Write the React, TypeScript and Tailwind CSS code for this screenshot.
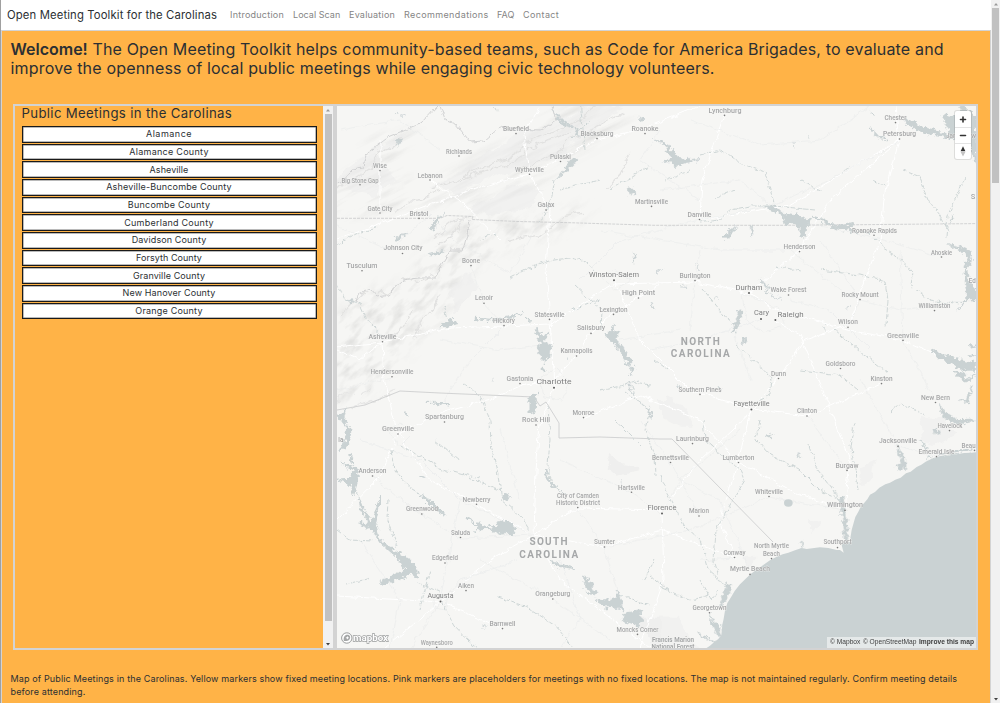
import React from "react";

const meetings: [string, string][] = [
  ["Alamance", "tracking-[0.5px]"],
  ["Alamance County", "tracking-[0.27px]"],
  ["Asheville", "tracking-[0.08px]"],
  ["Asheville-Buncombe County", "tracking-[0.17px]"],
  ["Buncombe County", "tracking-[0.22px]"],
  ["Cumberland County", "tracking-[0.25px]"],
  ["Davidson County", "tracking-[0.12px]"],
  ["Forsyth County", "tracking-[0.04px]"],
  ["Granville County", "tracking-[0.1px]"],
  ["New Hanover County", "tracking-[0.11px]"],
  ["Orange County", "tracking-[0.2px]"],
];

const navLinks: [string, string][] = [
  ["Introduction", "w-[54px] tracking-[0.24px]"],
  ["Local Scan", "w-[47px] tracking-[0.04px]"],
  ["Evaluation", "w-[46px] tracking-[0.22px]"],
  ["Recommendations", "w-[84px] tracking-[0.38px]"],
  ["FAQ", "w-[17px]"],
  ["Contact", "w-[37px] tracking-[0.4px]"],
];

// name, centre x, baseline y, width, dot x, dot y
type Place = [string, number, number, number, number, number];

const towns: Place[] = [
  ["Bluefield", 516, 131, 26, 516, 133.6],
  ["Blacksburg", 597, 136, 33, 597, 138.6],
  ["Roanoke", 645, 130.5, 27, 645, 133.6],
  ["Richlands", 459, 153.5, 26, 459, 156],
  ["Pulaski", 560.5, 159, 21, 560.5, 161.5],
  ["Wise", 380, 168, 14, 380, 170.6],
  ["Wytheville", 529.5, 171.5, 29, 529.5, 174.3],
  ["Lebanon", 430, 177.5, 25, 430, 180],
  ["Big Stone Gap", 360, 182.5, 37, 360, 184.7],
  ["Galax", 546, 207, 17, 546, 210],
  ["Martinsville", 651.5, 203.5, 33, 651.5, 206.4],
  ["Gate City", 380, 210.5, 25, 380, 213],
  ["Bristol", 419, 215.5, 19, 419, 218.4],
  ["Johnson City", 403, 250.3, 39, 402.5, 253.5],
  ["Boone", 471, 263, 18, 471, 265.6],
  ["Tusculum", 362, 267.5, 31, 362, 270.8],
  ["High Point", 638.5, 294.7, 33, 638.5, 298],
  ["Lenoir", 484, 300.3, 18, 484, 303.2],
  ["Lexington", 613.5, 311.5, 28, 613.5, 314.4],
  ["Statesville", 549.5, 316.5, 30, 549.5, 319.4],
  ["Hickory", 504, 322.7, 22, 504, 325.6],
  ["Salisbury", 591, 330.3, 28, 591, 333.4],
  ["Asheville", 382.5, 338.7, 28, 382.5, 341.7],
  ["Kannapolis", 576.5, 353, 32, 576.5, 356],
  ["Hendersonville", 392, 373.8, 43, 392, 376.7],
  ["Gastonia", 520, 380.5, 27, 520, 383.6],
  ["Lynchburg", 725, 112.6, 33, 724.5, 115.4],
  ["Chester", 895.5, 120, 22, 895.5, 122.6],
  ["Petersburg", 899.5, 136.3, 33, 899.5, 139],
  ["Danville", 699.5, 217, 24, 699.5, 219.5],
  ["Roanoke Rapids", 874.5, 232.5, 45, 874, 235.3],
  ["Henderson", 799.5, 249, 32, 799.5, 251.6],
  ["Ahoskie", 941.5, 254.8, 21, 941.5, 257],
  ["Burlington", 695, 278, 31, 695, 280.6],
  ["Wake Forest", 788.5, 292.3, 36, 788.5, 295],
  ["Rocky Mount", 860, 297, 37, 860, 299.6],
  ["Williamston", 934.5, 308.3, 32, 934.5, 310.6],
  ["Wilson", 848, 324.3, 20, 848, 327.2],
  ["Greenville", 903, 337.5, 32, 903, 340.4],
  ["Goldsboro", 840.5, 366, 30, 840.5, 368.5],
  ["Dunn", 778.5, 375.7, 15, 778.5, 378.5],
  ["Kinston", 881.5, 381, 22, 881.5, 383.6],
  ["Spartanburg", 444.5, 419, 39, 444.5, 422],
  ["Greenville", 398, 431, 32, 398, 434],
  ["Monroe", 583.5, 415, 22, 583.5, 417.6],
  ["Rock Hill", 536, 422, 28, 536, 425],
  ["Anderson", 372.5, 473, 28, 372.5, 476],
  ["Newberry", 476.5, 501.5, 28, 476.5, 504.3],
  ["Greenwood", 422, 511.3, 32, 421.8, 514],
  ["Hartsville", 631.5, 489.6, 27, 631.5, 492.3],
  ["City of Camden", 578, 497.7, 42, -9, -9],
  ["Historic District", 578, 505, 44, 577.8, 507.6],
  ["Saluda", 460.5, 534.6, 19, 460.5, 537.5],
  ["Sumter", 604.5, 544.2, 21, 604.5, 547],
  ["Edgefield", 445, 560.3, 26, 445, 563],
  ["Aiken", 466, 588, 16, 466, 590.6],
  ["Orangeburg", 552.8, 596, 35, 552.8, 599],
  ["Barnwell", 502.5, 626, 26, 502.5, 628.6],
  ["Moncks Corner", 637.5, 631.6, 42, 637.5, 634.4],
  ["Waynesboro", 436.7, 644.7, 32, 436.7, 647.4],
  ["Southern Pines", 700, 391.5, 43, 700, 394.4],
  ["Clinton", 807, 413.4, 20, 807, 416],
  ["New Bern", 935.5, 399.8, 29, 935.5, 402.5],
  ["Laurinburg", 692.5, 440.7, 33, 692.5, 443.6],
  ["Havelock", 950, 428.3, 25, 949.5, 430.6],
  ["Jacksonville", 898, 443.3, 38, 898, 446.4],
  ["Emerald Isle", 936.5, 453.5, 36, 936.5, 456.6],
  ["Beau", 968.6, 447.5, 14, 974.5, 450.4],
  ["Bennettsville", 670.5, 459.8, 37, 670.5, 462.5],
  ["Lumberton", 738.5, 459.5, 32, 738.5, 462.5],
  ["Burgaw", 847, 467.8, 23, 847, 470.4],
  ["Whiteville", 769, 494, 28, 769, 496.5],
  ["Wilmington", 845, 507, 36, 845, 510.4],
  ["Marion", 699, 513.3, 20, 699, 516],
  ["Southport", 837.5, 544.3, 28, 837.5, 547.6],
  ["Conway", 734.5, 554.8, 22, 734.5, 557.5],
  ["North Myrtle", 771.5, 548.3, 35, -9, -9],
  ["Beach", 771.5, 555.7, 17, 771.5, 558.6],
  ["Myrtle Beach", 750, 571, 40, 750, 574.4],
  ["Georgetown", 709.5, 610, 34, 709.5, 612.8],
  ["Ed", 972.3, 283, 7, -9, -9],
  ["S", 973, 199, 4.5, -9, -9],
  ["Jamestow", 961, 137.5, 30, -9, -9],
  ["la", 340.8, 441.5, 5, -9, -9],
];

const cities: Place[] = [
  ["Winston-Salem", 614, 276.6, 50, 614, 280.3],
  ["Durham", 749, 289.8, 27, 749, 293],
  ["Cary", 761.5, 315.4, 15, 761, 319],
  ["Raleigh", 790.5, 317.3, 26, 775.4, 320],
  ["Charlotte", 554, 384, 35, 554, 387.8],
  ["Fayetteville", 751.5, 406, 36, 751.4, 409.4],
  ["Florence", 662, 510, 29, 662, 513.5],
  ["Augusta", 440.5, 598, 26, 440.5, 601.5],
];

const Label = ({ place, city }: { place: Place; city?: boolean }) => {
  const [name, cx, y, w, dx, dy] = place;
  return (
    <g>
      <text
        x={cx}
        y={y}
        textAnchor="middle"
        textLength={w}
        lengthAdjust="spacingAndGlyphs"
        fontSize={city ? 8 : 7.2}
        fontWeight={city ? 400 : 500}
        fill={city ? "#808182" : "#a6a7a8"}
        stroke="#f6f6f4"
        strokeWidth={0.6}
        paintOrder="stroke"
      >
        {name}
      </text>
      <circle cx={dx} cy={dy} r={city ? 1 : 0.8} fill={city ? "#5c5c5c" : "#7b7b7b"} />
    </g>
  );
};

const nw = "translate(330 100) scale(0.33333)";
const ne = "translate(660 100) scale(0.33333)";
const sw = "translate(330 370) scale(0.33333)";
const se = "translate(660 370) scale(0.33333)";

const CarolinaMap = () => (
  <svg
    viewBox="337 106 639 542"
    preserveAspectRatio="none"
    className="block h-[542px] w-[639px] font-['Roboto',sans-serif]"
  >
    <defs>
      <filter id="shore" x="-10%" y="-10%" width="120%" height="120%">
        <feTurbulence type="fractalNoise" baseFrequency="0.22" numOctaves="3" seed="7" />
        <feDisplacementMap in="SourceGraphic" scale="8" xChannelSelector="R" yChannelSelector="G" />
      </filter>
      <filter id="wiggle" x="-10%" y="-10%" width="120%" height="120%">
        <feTurbulence type="fractalNoise" baseFrequency="0.12" numOctaves="3" seed="3" />
        <feDisplacementMap in="SourceGraphic" scale="6" xChannelSelector="R" yChannelSelector="G" />
      </filter>
      <filter id="relief" x="-10%" y="-10%" width="120%" height="120%">
        <feTurbulence type="fractalNoise" baseFrequency="0.06" numOctaves="4" seed="11" />
        <feDisplacementMap in="SourceGraphic" scale="14" xChannelSelector="R" yChannelSelector="G" />
        <feGaussianBlur stdDeviation="0.5" />
      </filter>
      <filter id="ridges" x="0%" y="0%" width="100%" height="100%" colorInterpolationFilters="sRGB">
        <feTurbulence type="fractalNoise" baseFrequency="0.018 0.13" numOctaves="4" seed="5" />
        <feColorMatrix values="0 0 0 0 0.45  0 0 0 0 0.45  0 0 0 0 0.45  2 0 0 0 -0.9" />
      </filter>
      <filter id="peaks" x="0%" y="0%" width="100%" height="100%" colorInterpolationFilters="sRGB">
        <feTurbulence type="fractalNoise" baseFrequency="0.05 0.13" numOctaves="4" seed="9" />
        <feColorMatrix values="0 0 0 0 0.45  0 0 0 0 0.45  0 0 0 0 0.45  2 0 0 0 -0.9" />
      </filter>
      <filter id="soft">
        <feGaussianBlur stdDeviation="7" />
      </filter>
      <mask id="valleys" maskUnits="userSpaceOnUse" x="337" y="106" width="640" height="542">
        <path
          filter="url(#soft)"
          fill="#ffffff"
          d="M330 190 L370 140 L420 125 L400 165 L420 195 L470 160 L520 130 L570 106 L640 106 L620 130 L560 165 L500 215 L440 205 L370 215 L330 215Z"
        />
      </mask>
      <mask id="blueridge" maskUnits="userSpaceOnUse" x="337" y="106" width="640" height="542">
        <path
          filter="url(#soft)"
          fill="#ffffff"
          d="M330 320 L370 290 L410 282 L430 240 L460 220 L550 215 L600 200 L570 230 L500 250 L465 275 L450 310 L420 340 L390 372 L370 395 L330 405Z"
        />
      </mask>
    </defs>
    <rect x="337" y="106" width="640" height="542" fill="#f6f6f4" />

    {/* hill shading */}
    <g mask="url(#valleys)" opacity="0.19">
      <g transform="rotate(-27 470 160)">
        <rect x="300" y="40" width="380" height="240" filter="url(#ridges)" />
      </g>
    </g>
    <g mask="url(#blueridge)" opacity="0.2">
      <g transform="rotate(-42 440 310)">
        <rect x="260" y="180" width="380" height="260" filter="url(#peaks)" />
      </g>
    </g>
    <g filter="url(#relief)" fill="none" strokeLinecap="round">
      <g transform={nw}>
        <path fill="#ececeb" fillOpacity="0.5" d="M20 250 L60 200 L130 145 L230 95 L215 125 L140 165 L200 240 L130 285 L70 275Z M440 190 L560 100 L690 60 L780 20 L880 18 L820 70 L700 160 L540 220 L380 270 L290 270Z M430 330 L520 260 L640 265 L600 320 L480 345Z M370 560 L430 520 L430 570 L370 640Z" />
        <g stroke="#e2e2e1" strokeWidth="4">
          <path d="M300 270 L420 225 L520 175 L640 110 L760 55 L800 20 M400 240 L500 205 L600 150 L720 100 M580 210 L680 150 L780 90 L880 40 M190 330 L260 300 L320 280 M20 270 L70 240 L130 200 L150 160 L220 110" />
          <path d="M310 410 L370 360 L420 350 M320 430 L380 395 L400 360 M540 430 L620 410 L700 350 L760 340 M830 260 L870 220 L900 160" />
          <path d="M30 650 L60 620 L100 580 M160 720 L210 690 L250 630 M250 710 L300 640 L330 590 M210 530 L260 545 L310 525 M140 570 L170 590 L200 560" />
        </g>
      </g>
      <g transform={sw}>
        <path fill="#efefee" d="M835 300 L850 255 L875 275 L900 280 L920 300 L860 320Z M925 740 L1020 740 L1020 830 L960 830Z" />
        <path stroke="#e6e6e5" strokeWidth="4" d="M60 110 L140 90 L200 60 M20 90 L60 70 M90 70 L130 50" />
      </g>
      <g transform={se}>
        <path fill="#f1f1f0" d="M0 80 L80 120 L110 170 L60 170 L0 140Z M780 140 L840 150 L890 190 L850 230 L790 210Z M590 290 L650 270 L640 330 L600 350Z M450 460 L475 455 L470 480 L450 485Z M0 740 L50 740 L120 830 L0 830Z M250 560 L300 560 L260 600Z" />
      </g>
    </g>

    {/* roads */}
    <g fill="none" stroke="#ffffff" strokeWidth="1" filter="url(#wiggle)">
      <path d="M337 347 L382 342 L450 328 L504 326 L550 324 L614 284 L695 282 L749 293 L775 310 L848 330 L903 340 L976 372" />
      <path d="M398 434 L444 412 L490 400 L520 386 L554 380 L576 356 L591 333 L614 312 L640 296 L660 284" />
      <path d="M554 388 L540 425 L536 470 L534 535 L560 580 L600 610 L650 648" />
      <path d="M554 388 L550 320 L546 270 L550 210 L529 174 L524 135 L540 106" />
      <path d="M337 240 L402 215 L470 190 L529 174 L560 158 L597 140 L645 128 L700 106" />
      <path d="M385 648 L440 602 L490 560 L534 535 L577 508 L662 510 L700 460 L751 412 L778 378 L805 340 L848 325 L880 240 L884 200 L899 140 L895 106" />
      <path d="M337 520 L380 476 L398 434 M398 434 L430 480 L534 535 M337 596 L440 602 L502 628 M534 535 L604 547 L662 530 L735 558" />
      <path d="M382 342 L384 380 L398 434 M382 342 L360 360 L337 350 M775 320 L800 335 L835 420 L850 460 L845 510" />
      <path d="M662 513 L664 580 L640 648 M751 409 L738 462 L720 520 L735 558 M583 418 L640 395 L700 420 L738 462 L800 495 L845 510" />
      <path d="M614 280 L640 340 L690 390 L751 409 L807 416 L881 384 M749 293 L799 251 L830 200 L899 140" />
      <path d="M700 220 L702 180 L724 115 M700 220 L790 205 L899 140 M380 213 L380 170 L380 140 M430 180 L459 200 L500 240" />
    </g>
    <g fill="none" stroke="#e9ebeb" strokeWidth="0.6" filter="url(#wiggle)">
      <path d="M337 225 L390 250 L430 215 L455 240 L510 274 L546 210 M471 265 L484 303 L504 326 L470 360 L444 400 M580 280 L620 240 L690 222 L770 206 L830 180 L899 142" />
      <path d="M690 120 L760 145 L820 140 L870 106 M660 190 L740 180 L790 220 L870 236 L941 257 M650 350 L700 340 L760 320 M790 250 L840 290 L860 300 L900 310 L976 300" />
      <path d="M360 440 L420 460 L460 500 L440 600 M460 500 L534 535 M372 476 L420 514 L460 538 L534 535 M500 430 L520 500 M577 508 L604 547 L620 600 M604 547 L690 530 L769 497 L845 510" />
      <path d="M700 560 L735 558 M680 480 L720 500 L750 570 M807 416 L847 470 M860 380 L898 446 L936 456 M640 420 L670 462 L700 516 M560 460 L631 492 L660 513 M480 560 L553 599 L610 640 M410 648 L440 602" />
      <path d="M340 130 L400 120 L440 150 M660 130 L640 160 L700 200 M337 390 L392 377 M560 560 L580 620 L560 648 M740 310 L735 340 L751 380 M790 300 L830 310 L870 350" />
      <path d="M742 292 L760 301 L778 308 L785 326 L763 332 L745 320Z M540 378 L556 368 L570 382 L562 400 L544 397Z M600 276 L614 270 L632 280 L616 290Z M388 430 L400 423 L412 434 L400 446Z M434 596 L447 597 L446 610 L434 608Z" />
      <path d="M440 340 L500 350 L540 345 M620 340 L680 330 M600 230 L660 240 L720 250 L790 250 M700 250 L695 282 L690 330 M820 240 L860 300 L848 325 M900 250 L903 340 L935 400 M740 430 L680 480 L662 513 M520 560 L460 580 L440 602 M360 540 L400 600 L390 648" />
    </g>

    {/* state lines */}
    <g fill="none" stroke="#c9cacb" strokeWidth="0.8">
      <path strokeDasharray="3 1" d="M337 218.3 H440 L447 215.5 L473 216.5 L472 219.5 L518 221.5 L570 222.7 L654 225.3 L780 225.3 L850 224.8 L976 223.6" />
      <g filter="url(#wiggle)">
        <path d="M470 220 L467 235 L463 250 L450 250 L441 265 L435 278 L418 278 L404 280 L388 295 L378 297 L370 288 L358 294 L356 303" />
        <path d="M437 106 L420 124 L390 136 L366 154 L363 168 L352 170 L337 186 M440 106 L445 120 L456 124 L470 142 L484 141 L500 127 L514 129 L540 130 L556 122 L552 106" />
      </g>
      <path d="M337 410 L365 405 L400 391 L440 393 L534 397 L540 406 L546 402 L559 423 L559 438 L600 437 L660 439 L672 439 L773 542" />
    </g>

    {/* rivers */}
    <g fill="none" stroke="#cad2d3" strokeWidth="0.9" filter="url(#wiggle)">
      <g strokeDasharray="5 1.5">
        <path d="M337 245 L350 238 L362 232 L378 227 M443 305 L447 318 M510 278 L530 268 L553 260 L570 258 L586 262 L595 272 M337 282 L345 300 L360 305 L366 318 L382 336" />
        <path d="M555 180 L552 196 L546 215 L538 222 M700 155 L720 150 L745 165 L765 172 L772 196 L775 206 M815 210 L775 206 L750 206 L730 210 L717 220 L700 223" />
        <path d="M902 170 L918 176 L928 200 L940 215 L949 232 M965 178 L957 195 L948 215 L946 238 M875 238 L884 248 L896 255 L912 272 L910 285 L930 300 M930 300 L960 305 L970 295" />
        <path d="M776 266 L800 272 M820 270 L860 275 L885 282 L888 300 L886 325 M835 330 L865 355 L888 372 M702 288 L720 310 L734 328 M736 346 L760 365 L772 380 L770 396 L757 402" />
        <path d="M464 384 L480 395 L490 420 L491 445 L498 475 L502 500 L520 515 L530 530 M392 450 L395 470 L412 490 L430 500 M400 445 L440 468 L480 478 M435 440 L460 460" />
        <path d="M470 478 L500 490 M548 405 L550 440 L548 465 L550 480 M632 385 L636 400 L650 410 L645 430 L655 455 L656 475 M355 490 L365 510 L380 530" />
        <path d="M417 583 L440 592 L446 610 L455 626 L468 640 L478 648 M498 597 L525 606 L555 625 L573 648 M388 500 L387 520 L398 545 M345 585 L370 578" />
        <path d="M337 530 L350 540 L373 541 M600 390 L640 380 M625 392 L650 410 M650 385 L635 382 M660 475 L665 490 L684 525 L700 540 L708 570 L720 580" />
        <path d="M703 420 L705 440 L740 470 L745 480 L730 505 L716 530 L714 560 L720 580 L728 590 M760 420 L756 440 L770 455 L800 470 L820 490 L842 500" />
        <path d="M809 445 L815 465 L832 488 L842 508 M855 422 L850 445 L856 470 L858 490 M890 412 L900 403 L925 415 M842 508 L835 490 M700 580 L712 600 L718 590 M662 588 L690 600 L710 595" />
        <path d="M615 420 L640 445 M495 106 L498 112 M610 190 L650 165 M560 190 L600 180 M480 240 L495 235 M580 100 L585 150 M575 285 L602 310 L601 330 M430 570 L420 610 M620 595 L650 605 M650 575 L668 590" />
        <path d="M735 190 L715 198 M800 180 L822 192 M872 180 L886 186 M690 170 L665 180 M840 175 L850 166 M600 300 L570 310 M655 360 L668 370 M858 390 L840 375 L800 370 M570 140 L590 120 M643 580 L655 560" />
      </g>
    </g>

    {/* lakes and sounds */}
    <g fill="#cad2d3" stroke="#cad2d3" strokeWidth="1.6" strokeLinejoin="round" filter="url(#shore)">
      <g transform={nw}>
        <path d="M300 385 L315 360 L345 335 L320 368 L310 395Z M195 40 L230 48 L200 42Z M195 120 L220 115 L205 135Z M195 410 L230 400 L200 425Z M290 460 L340 450 L320 468Z M55 600 L70 605 L60 615Z" />
        <path d="M330 680 L365 655 L378 670 L350 680Z M430 655 L490 658 L540 650 L580 640 L540 656 L490 663Z M580 645 L600 668 L590 655Z" strokeWidth="3" />
        <path d="M615 685 L640 705 L655 700 L640 725 L665 735 L660 770 L640 790 L625 760 L630 730Z M636 800 L648 815 L636 820Z" />
        <path d="M820 700 L840 695 L850 670 L852 700 L870 690 L860 720 L880 740 L905 780 L900 800 L880 775 L845 720Z M900 800 L905 825 L915 805Z" />
        <path d="M895 260 L912 270 L915 288 L895 280Z M910 460 L920 465 L908 485Z M970 118 L1000 125 L1020 140 L1000 132Z M1005 185 L1020 190 M720 180 L745 178 L710 210 L680 238 L705 205Z M665 30 L700 65 L740 85 L745 110 L735 88 L695 72Z M930 50 L945 58 L935 64Z M960 605 L975 630 L965 620Z M710 773 L716 780Z M540 535 L550 530Z M975 518 L1005 508Z" />
      </g>
      <g transform={ne}>
        <path d="M0 115 L30 145 L50 170 L75 180 L120 175 L75 190 L50 200 L30 182 L5 185 L35 175Z" />
        <path strokeWidth="3" d="M305 318 L345 322 L375 345 L390 342 L410 345 L450 360 L440 380 L430 415 L420 410 L420 380 L400 370 L375 375 L370 350 L340 330Z M455 352 L490 358 L530 380 L580 370 L570 388 L635 400 L580 394 L520 382 L490 366Z" />
        <path d="M185 415 L210 390 L230 380 L205 415Z M270 380 L278 378 L275 410Z M300 540 L322 555 L320 575 L345 590 L365 600 L335 585Z M235 630 L248 635 L230 690 L212 705 L225 675Z M245 715 L262 712 L252 735Z M485 675 L500 690Z M555 625 L572 620Z M108 490 L115 510Z M162 595 L175 590Z M60 560 L85 563Z M440 105 L448 115Z M398 130 L402 142Z" />
        <path strokeWidth="5" d="M635 88 L660 115 L685 118 L655 112Z M630 38 L645 45Z M735 62 L760 60 L775 80 L820 90 L850 100 L880 118 L840 105 L800 100 L770 88Z M850 45 L880 52 L890 90 L885 50 L910 18 L930 40 L948 50 L948 190 L938 160 L930 120 L890 120 L870 100Z" />
        <path d="M860 430 L900 440 L930 455 L935 480 L920 500 L925 540 L948 565 L948 600 L925 600 L890 630 L920 595 L915 540 L915 500 L925 470 L890 445Z" />
        <path strokeWidth="5" d="M815 750 L850 765 L890 778 L948 790 L948 810 L920 810 L870 792 L840 775Z M930 740 L948 735Z M925 765 L948 768Z M872 360 L878 350Z" />
      </g>
      <g transform={sw}>
        <path strokeWidth="4" d="M25 140 L48 118 L40 150 L62 180 L58 215 L40 240 L30 240 L48 210 L50 170Z M35 280 L80 295 L85 320 L70 375 L62 345 L20 328 L65 325 L70 300Z M60 250 L70 280 L64 275Z" />
        <path strokeWidth="4" d="M85 385 L100 420 L125 460 L145 400 L152 380 L135 465 L150 510 L190 540 L240 570 L260 600 L262 622 L240 612 L185 635 L150 640 L190 615 L230 600 L200 560 L155 520 L125 475 L80 460 L118 460 L95 420Z" />
        <path strokeWidth="3" d="M270 375 L300 390 L340 430 L352 438 L320 425Z M405 440 L450 465 L490 475 L510 450 L550 460 L555 490 L510 492 L480 478 L430 480 L450 470Z M530 365 L538 380 L530 395 L515 385Z M292 97 L355 98 L360 105Z M600 80 L620 70 L615 125 L600 128Z M650 300 L658 330 L680 355 L710 375 L670 350 L648 325Z M270 318 L284 322Z M226 125 L234 138Z M660 575 L700 585 L735 595 L690 590Z" />
        <path d="M760 620 L775 625 L798 670 L790 678 L765 655Z M795 685 L835 690 L860 680 L862 660 L875 700 L882 720 L850 710 L820 712Z M880 730 L932 722 L935 755 L920 770 L880 755Z M896 30 L902 60 L908 70 L898 62Z M955 110 L965 130 L960 150 M870 330 L882 345 M460 768 L470 772Z M195 515 L200 535 M485 22 L490 35" />
      </g>
      <g transform={se}>
        <path
          strokeWidth="5"
          d="M540 380 L548 385 L558 440 L562 505 L554 505 L548 440Z M712 232 L735 275 L732 298 L708 290 L728 280Z M838 105 L852 125 L890 150 L945 148 L890 163 L850 140Z M880 0 L905 8 L920 30 L948 15 L915 38Z M900 90 L925 98 L935 50 L918 90Z M822 178 L840 180 L832 195Z M780 215 L800 235Z M802 265 L860 250 L940 235 L860 258Z M415 250 L420 262Z M390 285 L400 290Z M55 45 L62 50Z M175 50 L182 55Z M320 195 L335 202Z M425 515 L428 535Z M150 735 L158 760 L182 770 L175 795 L160 770Z M115 790 L160 815Z M200 640 L212 650 L198 690 L178 710 L190 680Z"
        />
      </g>
    </g>

    {/* ocean */}
    <g transform={se}>
      <ellipse cx="385" cy="399" rx="13" ry="11" fill="#cad2d3" />
      <path fill="#cad2d3" d="M960 246 L935 248 L912 249 L890 253 L862 257 L835 262 L812 268 L797 275 L784 284 L770 291 L752 305 L738 310 L722 323 L706 329 L690 338 L676 343 L658 353 L645 366 L630 374 L622 388 L613 398 L602 411 L595 425 L586 441 L580 462 L575 480 L571 505 L575 517 L553 514 L545 526 L551 548 L540 540 L530 540 L505 534 L480 532 L440 537 L425 534 L405 541 L385 548 L368 553 L350 560 L330 571 L314 582 L290 599 L272 612 L257 626 L240 643 L224 663 L213 682 L202 699 L195 722 L191 746 L187 764 L184 795 L175 807 L162 817 L150 827 L128 842 L960 842Z" />
      <path fill="none" stroke="#f6f6f4" strokeWidth="3" d="M948 243 L900 246 L840 257 L800 268" />
    </g>

    {towns.map((p, i) => (
      <Label key={i} place={p} />
    ))}
    {cities.map((p, i) => (
      <Label key={i} place={p} city />
    ))}

    <g fill="#a6a8a9" stroke="#f6f6f4" strokeWidth="0.6" paintOrder="stroke" textAnchor="middle">
      <g fontSize="10" fontWeight="700">
        <text x="700.3" y="344.7" textLength="39">NORTH</text>
        <text x="700.3" y="357.2" textLength="59">CAROLINA</text>
        <text x="548.5" y="545" textLength="38">SOUTH</text>
        <text x="548.7" y="557.5" textLength="59">CAROLINA</text>
      </g>
      <g fontSize="6.8" fontWeight="700">
        <text x="673" y="641.5" textLength="42" lengthAdjust="spacingAndGlyphs">Francis Marion</text>
        <text x="673" y="649" textLength="43" lengthAdjust="spacingAndGlyphs">National Forest</text>
      </g>
    </g>

    {/* provider mark */}
    <g>
      <circle cx="346.8" cy="638" r="5.2" fill="#ffffff" stroke="#9b9d9d" strokeWidth="1" />
      <path d="M343.8 641 C343.2 637.2 344.6 634.8 347.4 634.8 C350 634.8 350.8 637.4 349.6 639.2 C348.4 640.9 346.2 641.2 343.8 641Z" fill="#a5a7a7" />
      <path d="M347.4 636.1 L348 637.3 L349.2 637.8 L348 638.4 L347.4 639.6 L346.8 638.4 L345.6 637.8 L346.8 637.3Z" fill="#ffffff" />
      <text
        x="353"
        y="641.2"
        textLength="35"
        lengthAdjust="spacingAndGlyphs"
        fontSize="9.5"
        fontWeight="700"
        fill="#ffffff"
        stroke="#9b9d9d"
        strokeWidth="1.3"
        paintOrder="stroke"
      >
        mapbox
      </text>
    </g>
  </svg>
);

const ScrollArrow = ({ down, dark }: { down?: boolean; dark?: boolean }) => (
  <svg viewBox="0 0 8 8" className="block h-2 w-2">
    <path d={down ? "M2 3 H6 L4 5.4Z" : "M2 5.4 H6 L4 3Z"} fill={dark ? "#404040" : "#9a9a9a"} />
  </svg>
);

export default function App() {
  return (
    <div className="flex h-[703px] w-[1000px] overflow-hidden bg-white font-['Inter',sans-serif] text-[#2b2f33]">
      <div className="flex h-full w-[991px] flex-col border-l border-[#a0a0a0]">
        <nav className="flex h-[30px] shrink-0 items-center pl-[6px]">
          <span className="w-[210px] whitespace-nowrap text-[11.3px] leading-4 tracking-[0.13px]">
            Open Meeting Toolkit for the Carolinas
          </span>
          <div className="ml-[13px] flex gap-[9px] text-[9px] leading-4 text-[#858585]">
            {navLinks.map(([t, w]) => (
              <a key={t} className={`${w} whitespace-nowrap`}>
                {t}
              </a>
            ))}
          </div>
        </nav>
        <main className="flex grow flex-col border-x border-t border-[#d3d3d3] bg-[#ffb347]">
          <h1 className="ml-[8.5px] mt-[9px] whitespace-nowrap text-[16px] leading-[19px]">
            <span className="block tracking-[0.165px]">
              <b className="font-semibold tracking-[0px]">Welcome!</b> The Open Meeting Toolkit helps community-based teams,
              such as Code for America Brigades, to evaluate and
            </span>
            <span className="block tracking-[0.18px]">
              improve the openness of local public meetings while engaging civic technology volunteers.
            </span>
          </h1>
          <section className="ml-[11px] mt-[26px] flex h-[546px] w-[965px] shrink-0 border-2 border-[#d3d3d3]">
            <div className="flex h-full w-[308px] shrink-0 flex-col bg-[#ffb347] pl-[6.5px] pr-[6.5px]">
              <h2 className="mb-[4px] whitespace-nowrap text-[13.2px] leading-[15px] tracking-[0.34px]">
                Public Meetings in the Carolinas
              </h2>
              <ul className="mt-[1px] flex flex-col gap-[1px]">
                {meetings.map(([name, t]) => (
                  <li
                    key={name}
                    className={`${t} flex h-[16.67px] items-center justify-center border border-[#1a1a1a] bg-white text-[9px] leading-3 shadow-[inset_0_0_0_0.5px_#777]`}
                  >
                    {name}
                  </li>
                ))}
              </ul>
            </div>
            <div className="flex w-[10px] shrink-0 flex-col items-center justify-between bg-[#f1f1f1]">
              <ScrollArrow />
              <div className="w-[7px] grow bg-[#c1c1c1]" />
              <div className="h-[19px]" />
              <ScrollArrow down dark />
            </div>
            <div className="w-[4px] shrink-0 bg-[#d3d3d3]" />
            <div className="relative h-[542px] w-[639px] shrink-0 overflow-hidden">
              <CarolinaMap />
              <div className="absolute right-[5px] top-[5px] flex h-[48px] w-[16px] flex-col rounded-[2px] bg-white shadow-[0_0_0_1px_rgba(0,0,0,0.1)]">
                <svg viewBox="0 0 16 48" className="h-[48px] w-[16px]">
                  <path d="M0 16.5 H16 M0 32.5 H16" stroke="#dddddd" strokeWidth="0.8" />
                  <path d="M5.5 8.5 H10.5 M8 6 V11 M5.5 24.5 H10.5" stroke="#333333" strokeWidth="1.6" strokeLinecap="round" />
                  <path d="M5.6 40.2 L8 35.2 L10.4 40.2Z" fill="#333333" />
                  <path d="M5.6 41 L8 45.4 L10.4 41Z" fill="#c4c4c4" />
                </svg>
              </div>
              <div className="absolute bottom-0 right-0 flex h-[11px] w-[149px] items-center gap-[2.5px] whitespace-nowrap bg-white/50 pl-[3px] font-['Liberation_Sans',sans-serif] text-[6.65px] leading-none text-[#404040]">
                <span>© Mapbox</span>
                <span>© OpenStreetMap</span>
                <b>Improve this map</b>
              </div>
            </div>
          </section>
          <p className="ml-[8.5px] mt-[22px] whitespace-nowrap text-[9px] leading-[13.3px] tracking-[0.14px]">
            <span className="block">
              Map of Public Meetings in the Carolinas. Yellow markers show fixed meeting locations. Pink markers are
              placeholders for meetings with no fixed locations. The map is not maintained regularly. Confirm meeting
              details
            </span>
            <span className="block">before attending.</span>
          </p>
        </main>
      </div>
      <div className="flex h-full w-[9px] flex-col items-center bg-[#f1f1f1]">
        <ScrollArrow />
        <div className="h-[175px] w-[7px] bg-[#c1c1c1]" />
        <div className="grow" />
        <ScrollArrow down dark />
      </div>
    </div>
  );
}
